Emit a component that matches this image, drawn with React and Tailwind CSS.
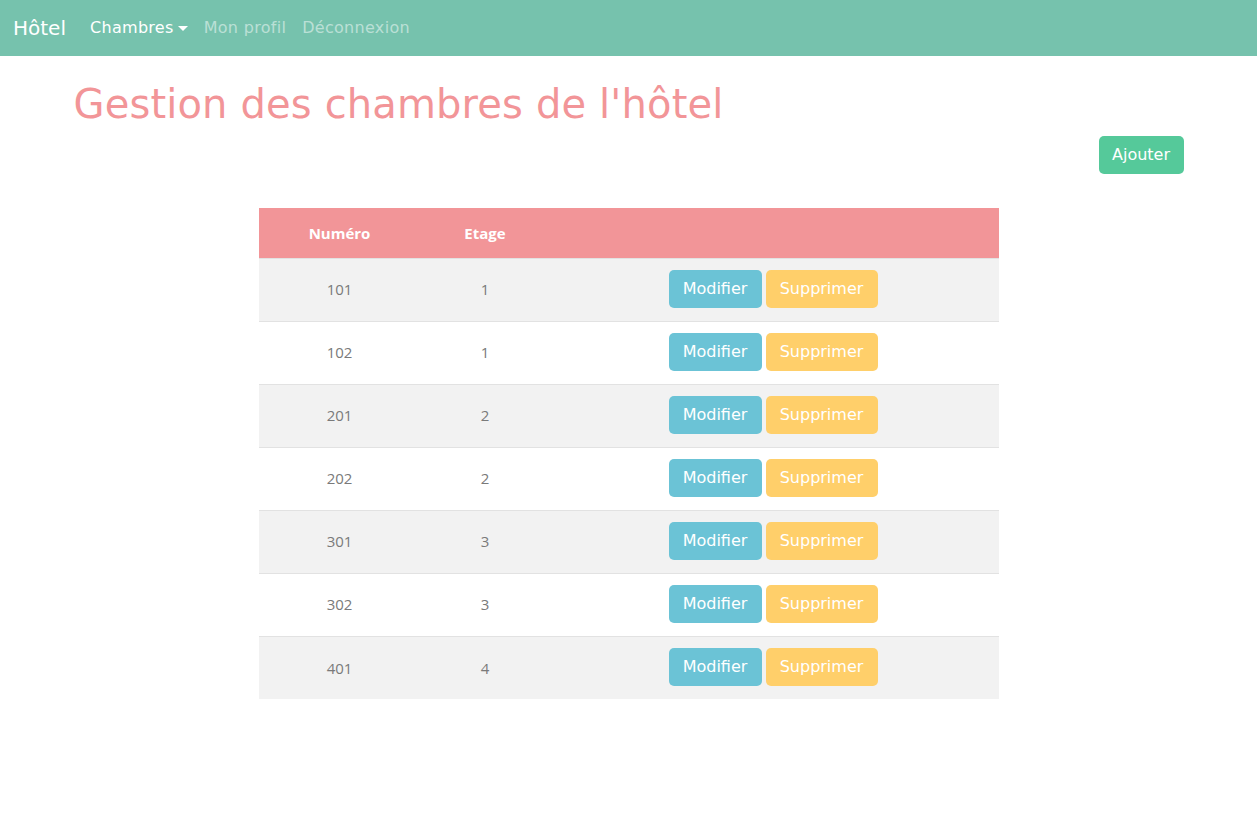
const rows = [
  ["101", "1"],
  ["102", "1"],
  ["201", "2"],
  ["202", "2"],
  ["301", "3"],
  ["302", "3"],
  ["401", "4"],
];

export default function App() {
  const mont = { fontFamily: '"DejaVu Sans", sans-serif' };
  return (
    <div className="min-h-[815px] bg-white" style={mont}>
      <nav className="h-14 bg-[#76c2ad] flex items-center px-[13px]">
        <span className="text-[20px] text-white mr-4 leading-none">Hôtel</span>
        <div className="flex items-center text-[16px] leading-none tracking-[0.3px]">
          <span className="px-2 text-white flex items-center">
            Chambres
            <span className="ml-[4px] inline-block w-0 h-0 border-l-[5px] border-r-[5px] border-t-[5px] border-l-transparent border-r-transparent border-t-white"></span>
          </span>
          <span className="px-2 text-white/50">Mon profil</span>
          <span className="px-2 text-white/50">Déconnexion</span>
        </div>
      </nav>
      <div className="max-w-[1140px] mx-auto px-[15px] pt-[24px]">
        <h1 className="text-[40px] leading-[48px] text-[#f29598] mb-2 tracking-[0.15px]">Gestion des chambres de l'hôtel</h1>
        <div className="flex justify-end">
          <button className="w-[85px] h-[38px] rounded-[5px] bg-[#55c99a] text-white text-[16px]">Ajouter</button>
        </div>
      </div>
      <div className="flex justify-center mt-[34px]">
        <table className="w-[740px] border-collapse" style={{ fontFamily: '"Open Sans", sans-serif' }}>
          <thead>
            <tr className="bg-[#f29598] h-[50px]">
              <th className="w-[162px] text-white text-[15px] font-bold">Numéro</th>
              <th className="w-[129px] text-white text-[15px] font-bold">Etage</th>
              <th></th>
            </tr>
          </thead>
          <tbody>
            {rows.map(([n, e], i) => (
              <tr key={n} className={(i % 2 === 0 ? "bg-[#f2f2f2]" : "bg-white") + " h-[63px] border-t border-[#e2e2e2]"}>
                <td className="text-center text-[15px] text-[#7a7a7a]">{n}</td>
                <td className="text-center text-[15px] text-[#7a7a7a]">{e}</td>
                <td>
                  <div className="flex justify-center gap-[4px] -mt-[1px] -ml-[2px]" style={mont}>
                    <button className="w-[93px] h-[38px] rounded-[5px] bg-[#6bc3d6] text-white text-[16px]">Modifier</button>
                    <button className="w-[112px] h-[38px] rounded-[5px] bg-[#ffcf6a] text-white text-[16px]">Supprimer</button>
                  </div>
                </td>
              </tr>
            ))}
          </tbody>
        </table>
      </div>
    </div>
  );
}
